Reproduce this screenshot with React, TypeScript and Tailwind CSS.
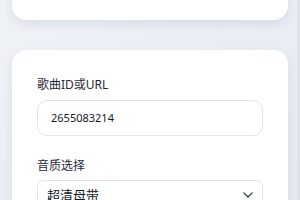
import { ChevronDown } from "lucide-react";

export default function App() {
    return (
        <div
            className="flex h-[200px] w-[300px] overflow-hidden bg-gradient-to-br from-[#eff2f7] to-[#e5e9f1]"
            style={{ fontFamily: '"Noto Sans", "Noto Sans CJK SC", sans-serif' }}
        >
            <div className="flex flex-1 flex-col gap-[30px] pl-3 pr-[9px] -mt-[100px]">
                <div className="h-[120px] shrink-0 rounded-[14px] bg-white shadow-[0_4px_10px_rgba(100,116,139,0.15)]" />
                <div className="shrink-0 rounded-[14px] bg-white px-[25px] pt-[25px] pb-6 shadow-[0_4px_10px_rgba(100,116,139,0.12)]">
                    <p className="text-[12px] leading-[20px] text-[#1f2937]">歌曲ID或URL</p>
                    <div className="mt-[5px] flex h-[36px] items-center rounded-[10px] border border-[#dfe3ea] px-[13px] text-[11px] text-[#111827]">
                        2655083214
                    </div>
                    <p className="mt-[20px] text-[12px] leading-[20px] text-[#1f2937]">音质选择</p>
                    <div className="mt-[4px] flex h-[40px] items-start justify-between rounded-[6px] border border-[#dfe3ea] pl-[9px] pr-[6px] pt-[4px] text-[13px] leading-[20px] text-[#111827]">
                        <span>超清母带</span>
                        <ChevronDown className="mt-[2px] h-4 w-4 text-[#374151]" strokeWidth={2} />
                    </div>
                </div>
            </div>
            <div className="w-[3px] shrink-0 bg-[#dde2ea]" />
        </div>
    );
}
